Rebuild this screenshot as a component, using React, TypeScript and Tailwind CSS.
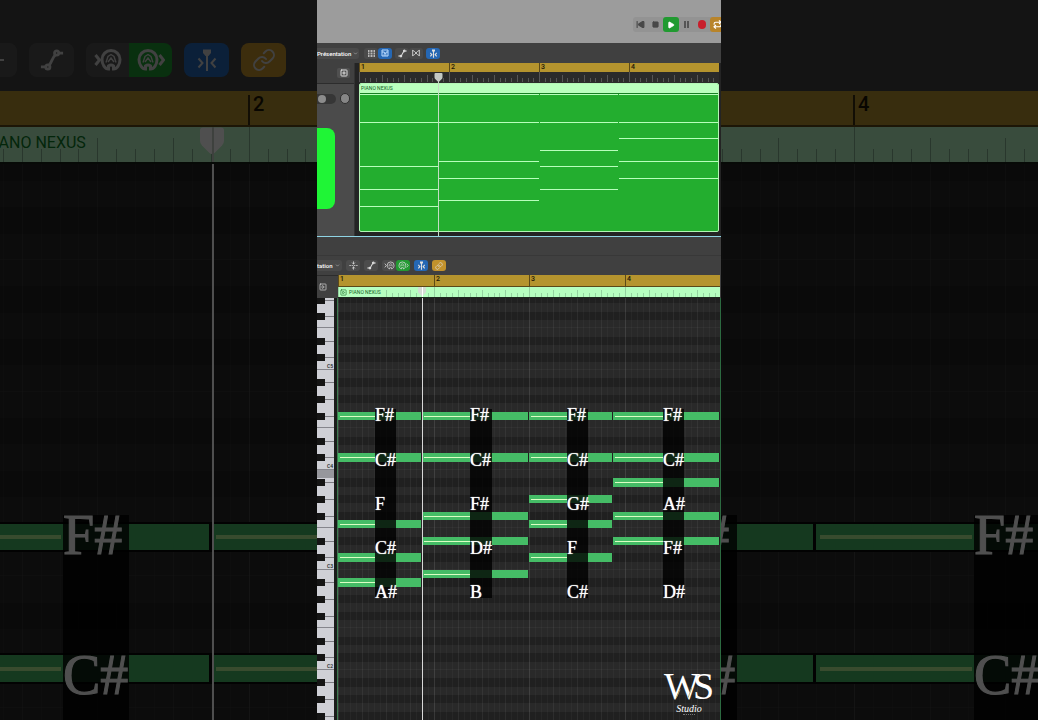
import React from "react";
import {
  ChevronDown,
  FoldVertical,
  Link,
  Play,
  Repeat,
  SkipBack,
  Square,
  SquarePlay,
  SquarePlus,
} from "lucide-react";

const BLACK = [1, 3, 6, 8, 10];
const ZOOM = 3.163;
const BAR = 95.7;
const PLAYHEAD = 84;

type Chord = {
  start: number;
  end: number;
  labelStart: number;
  labelEnd: number;
  pitches: number[];
  names: string[];
};

// Pitches are semitones relative to C4; horizontal values are roll units.
const CHORDS: Chord[] = [
  { start: 0, end: 83, labelStart: 37, labelEnd: 58, pitches: [6, 1, -7, -11, -14], names: ["F#", "C#", "F", "C#", "A#"] },
  { start: 84, end: 190, labelStart: 132, labelEnd: 154, pitches: [6, 1, -6, -9, -13], names: ["F#", "C#", "F#", "D#", "B"] },
  { start: 191, end: 274, labelStart: 229, labelEnd: 250, pitches: [6, 1, -4, -7, -11], names: ["F#", "C#", "G#", "F", "C#"] },
  { start: 275, end: 381, labelStart: 325, labelEnd: 346, pitches: [6, 1, -2, -6, -9], names: ["F#", "C#", "A#", "F#", "D#"] },
];

const mod12 = (p: number) => ((p % 12) + 12) % 12;
const rowTop = (p: number, s: number) => Math.max(0, Math.round((172 - ((p + 1) * 25) / 3) * s));
const PITCHES = Array.from({ length: 76 }, (_, i) => 20 - i);

function CurveIcon({ className }: { className: string }) {
  return (
    <svg viewBox="0 0 26 26" className={className} fill="none" stroke="currentColor" strokeWidth="2">
      <path d="M1 20.5h5M10 18.5C13 15 13 11 16.5 7.500M20.500 5.500H25" />
      <circle cx="8.500" cy="20.500" r="2.300" />
      <circle cx="18" cy="5.500" r="2.300" />
    </svg>
  );
}

function MidiIcon({ className, out }: { className: string; out?: boolean }) {
  return (
    <svg viewBox="0 0 28 24" className={className} fill="none" stroke="currentColor" strokeWidth="2">
      <g transform={out ? undefined : "translate(6 0)"}>
        <path d="M8.500 18v3C5 21 2 16.500 2 11.500a9 9 0 0 1 18 0C20 16.500 17 21 13.500 21v-3q-2.500-2-5 0z" />
        <path d="M6 14.500l2-6 3-2 3 2 2 6M8 14l3-4 3 4" strokeWidth="1.400" />
      </g>
      <path d={out ? "M22.500 7l4 5-4 5" : "M1.500 7l4 5-4 5"} />
    </svg>
  );
}

function CatchIcon({ className }: { className: string }) {
  return (
    <svg viewBox="0 0 24 24" className={className} fill="none" stroke="currentColor" strokeWidth="2">
      <path d="M12 7v16M3.500 10.500l4 4.500-4 4.500M20.500 10.500l-4 4.500 4 4.500" />
      <path d="M8 1.500h8V5l-2.500 3h-3L8 5z" fill="currentColor" stroke="none" />
    </svg>
  );
}

function GridIcon({ className }: { className: string }) {
  return (
    <svg viewBox="0 0 7 7" className={className} fill="currentColor">
      {[0, 1, 2].map((r) => (
        <path key={r} d={`M0 ${r * 2.5}h1.500v2h-1.500zM2.500 ${r * 2.5}h2v2h-2zM5.500 ${r * 2.5}h1.500v2h-1.500z`} />
      ))}
    </svg>
  );
}

function FlexIcon({ className }: { className: string }) {
  return (
    <svg viewBox="0 0 24 24" className={className} fill="none" stroke="currentColor" strokeWidth="2.500">
      <path d="M2 3v18M22 3v18M2 4c8 2 12 14 20 16M22 4C14 6 10 18 2 20" />
    </svg>
  );
}

function RegionIcon({ className }: { className: string }) {
  return (
    <svg viewBox="0 0 24 24" className={className} fill="none" stroke="currentColor" strokeWidth="3">
      <path d="M3 3h18v18H3zM3 9h7v5h5V9h6M7 18h10" />
    </svg>
  );
}

function Pin({ className }: { className: string }) {
  return (
    <svg viewBox="0 0 24 27" className={className}>
      <path d="M3 0h18q3 0 3 3v10q0 3-2 5l-7 7q-3 3-6 0l-7-7q-2-2-2-5V3q0-3 3-3z" fill="currentColor" />
    </svg>
  );
}

function Ticks({ bar, height, offset, color, bars }: { bar: number; height: number; offset: number; color: string; bars: number }) {
  return (
    <svg className="absolute inset-0 size-full" aria-hidden="true">
      {Array.from({ length: bars * 16 }, (_, i) => {
        const x = Math.round(offset + (i * bar) / 16);
        const top = i % 16 === 0 ? 0 : i % 4 === 0 ? height * 0.3 : height * 0.62;
        return <rect key={i} x={x} y={Math.round(top)} width={1} height={Math.round(height - top)} fill={color} />;
      })}
    </svg>
  );
}

function BarNumbers({ bar, offset, large, numbers = [1, 2, 3, 4] }: { bar: number; offset: number; large?: boolean; numbers?: number[] }) {
  return (
    <>
      {numbers.map((n) => (
        <span
          key={n}
          style={{ left: Math.round(offset + (n - 1) * bar) }}
          className={
            large
              ? "absolute top-1 bottom-0 border-l-2 border-[#3a2f10] pl-[3px] font-[Roboto,sans-serif] text-[20px] leading-[18px] font-medium text-[#1c1605]"
              : "absolute top-0 bottom-0 border-l border-[#5c4a18] pl-px font-[Roboto,sans-serif] text-[7px] leading-[9px] font-medium text-[#1c1605]"
          }
        >
          {n}
        </span>
      ))}
    </>
  );
}

type RollProps = { scale: number; offset: number; large?: boolean; chords?: number[]; rows?: number; labelled?: number[] };

function Roll({ scale, offset, large, chords = [0, 1, 2, 3], rows = 5, labelled = [0, 1, 2, 3] }: RollProps) {
  const x = (v: number) => Math.round(offset + v * scale);
  return (
    <div className="relative min-h-0 flex-1 overflow-hidden bg-[#1e1e1e]">
      <div className="absolute inset-0">
        {PITCHES.map((p) => (
          <div
            key={p}
            style={{ height: rowTop(p - 1, scale) - rowTop(p, scale) }}
            className={
              BLACK.includes(mod12(p))
                ? "bg-[#202020]"
                : mod12(p) === 0 || mod12(p) === 5
                  ? "border-b border-[#303030] bg-[#292929]"
                  : "bg-[#292929]"
            }
          />
        ))}
      </div>
      <svg className="absolute inset-0 size-full" aria-hidden="true">
        {Array.from({ length: 64 }, (_, i) => (
          <rect
            key={i}
            x={x((i * BAR) / 16)}
            y={0}
            width={1}
            height="100%"
            fill="#ffffff"
            opacity={i % 16 === 0 ? 0.11 : i % 4 === 0 ? 0.06 : 0.03}
          />
        ))}
      </svg>
      {chords.map((k) => {
        const c = CHORDS[k];
        return (
          <React.Fragment key={c.start}>
            {c.pitches.slice(0, rows).map((p) => (
              <div
                key={p}
                style={{ left: x(c.start), width: x(c.end) - x(c.start), top: rowTop(p, scale), height: rowTop(p - 1, scale) - rowTop(p, scale) }}
                className={
                  large
                    ? "absolute flex items-center bg-[#45b864] outline-2 outline-[#080808]"
                    : "absolute flex items-center bg-[#45bc66]"
                }
              >
                <span
                  style={{ width: Math.round((c.labelStart - c.start - 2) * scale) }}
                  className={large ? "ml-1 h-1 bg-[#b4f096]" : "ml-[2px] h-px bg-[#dcffc4]"}
                />
              </div>
            ))}
            <div
              style={{
                left: x(c.labelStart),
                width: x(c.labelEnd) - x(c.labelStart),
                top: Math.round(111 * scale),
                height: Math.round(189 * scale),
              }}
              className="absolute bg-black/80"
            />
            {labelled.includes(k) &&
              c.names.slice(0, rows).map((n, i) => (
                <span
                  key={i}
                  style={{ left: x(c.labelStart), top: Math.round((117.2 + 44.3 * i) * scale) }}
                  className={
                    large
                      ? "absolute -mt-7 font-['Liberation_Serif',serif] text-[56px] leading-[56px] text-white [-webkit-text-stroke:1px_white]"
                      : "absolute -mt-[10px] font-['Liberation_Serif',serif] text-[18px] leading-5 text-white [text-shadow:0_0_1px_white]"
                  }
                >
                  {n}
                </span>
              ))}
          </React.Fragment>
        );
      })}
      <div style={{ left: x(PLAYHEAD) }} className={large ? "absolute inset-y-0 w-[2px] bg-white" : "absolute inset-y-0 w-px bg-[#d8d8d8]"} />
    </div>
  );
}

function Backdrop({ origin, tools }: { origin: number; tools?: boolean }) {
  const offset = -54 - origin;
  const head = Math.round(offset + PLAYHEAD * ZOOM);
  return (
    <section aria-hidden="true" className="min-w-0 flex-1 bg-black">
      <div className="flex h-full flex-col overflow-hidden opacity-[.31]">
        <div className="h-[29px] shrink-0 bg-[#404040]" />
        <div className="flex h-[62px] shrink-0 items-center bg-[#404040] text-[#d0d0d0]">
          {tools && (
            <>
              <span className="flex h-[34px] w-[17px] items-center rounded-r-lg bg-[#525252]">
                <span className="h-[2px] w-1 bg-[#d0d0d0]" />
              </span>
              <span className="ml-3 flex h-[34px] w-[45px] items-center justify-center rounded-lg bg-[#525252]">
                <CurveIcon className="size-6 stroke-[3px]" />
              </span>
              <span className="ml-3 flex h-[34px] w-[43px] items-center justify-center rounded-l-lg bg-[#525252]">
                <MidiIcon className="h-6 w-7 stroke-[3px]" />
              </span>
              <span className="flex h-[34px] w-[43px] items-center justify-center rounded-r-lg bg-[#1f9a30]">
                <MidiIcon out className="h-6 w-7 stroke-[3px]" />
              </span>
              <span className="ml-3 flex h-[34px] w-[45px] items-center justify-center rounded-lg bg-[#2568b8]">
                <CatchIcon className="size-6" />
              </span>
              <span className="ml-3 flex h-[34px] w-[45px] items-center justify-center rounded-lg bg-[#c2922c]">
                <Link className="size-6" />
              </span>
            </>
          )}
        </div>
        <div className="relative h-9 shrink-0 overflow-hidden border-b-2 border-[#5a4818] bg-[#b5922e]">
          <BarNumbers bar={BAR * ZOOM} offset={offset - 1} large numbers={tools ? [2] : [4]} />
        </div>
        <div className="relative h-[37px] shrink-0 overflow-hidden border-b-2 border-[#182018] bg-[#b8f5c4]">
          <Ticks bar={BAR * ZOOM} bars={4} height={36} offset={offset} color="#86b092" />
          {tools && (
            <>
              <span style={{ left: offset + 38 }} className="absolute top-[6px] font-[Roboto,sans-serif] text-[16px] leading-5 whitespace-nowrap text-[#0a7a26]">
                PIANO NEXUS
              </span>
              <span style={{ left: head }} className="absolute top-0 -ml-3 text-white">
                <Pin className="h-[28px] w-6" />
              </span>
              <span style={{ left: head }} className="absolute inset-y-0 w-[2px] bg-[#c8d0c8]" />
            </>
          )}
        </div>
        <Roll scale={ZOOM} offset={offset} large rows={2} chords={tools ? [0, 1] : [2, 3]} labelled={tools ? [0] : [2, 3]} />
      </div>
    </section>
  );
}

const TOOL = "flex h-[11px] w-[14px] items-center justify-center rounded-[3px] ";

function Transport() {
  const cell = "flex h-[15px] w-[15px] shrink-0 items-center justify-center text-[#484848]";
  return (
    <header className="flex h-[43px] shrink-0 items-center justify-end overflow-hidden bg-[#9c9c9c] pt-[6px]">
      <div className="flex w-[88px] overflow-hidden rounded-l-[3px] bg-[#939393]">
        <button aria-label="Rewind" className={cell}>
          <SkipBack className="size-[9px]" fill="currentColor" strokeWidth={3} />
        </button>
        <button aria-label="Stop" className={cell}>
          <Square className="size-[7px]" fill="currentColor" strokeWidth={3} />
        </button>
        <button aria-label="Play" className="flex h-[15px] w-4 shrink-0 items-center justify-center rounded-[3px] bg-[#219a31] text-white">
          <Play className="size-[8px]" fill="currentColor" />
        </button>
        <button aria-label="Pause" className={cell + " gap-px"}>
          <span className="h-[7px] w-[2px] bg-[#555]" />
          <span className="h-[7px] w-[2px] bg-[#555]" />
        </button>
        <button aria-label="Record" className={cell}>
          <span className="h-[9px] w-[8px] rounded-full bg-[#c81e2c]" />
        </button>
        <button aria-label="Cycle" className="ml-px flex h-[15px] w-[15px] shrink-0 items-center justify-center rounded-[3px] bg-[#b8842a] text-white">
          <Repeat className="size-[9px]" strokeWidth={3} />
        </button>
      </div>
    </header>
  );
}

function Arrange() {
  return (
    <section className="shrink-0">
      <div className="flex h-5 items-center bg-[#404040] text-[#e0e0e0]">
        <button className="flex h-[11px] w-[42px] items-center justify-between rounded-r-[3px] bg-[#4a4a4a] pr-px font-[Roboto,sans-serif] text-[6px] leading-[11px] font-medium text-white">
          Présentation
          <ChevronDown className="size-[5px] text-[#b0b0b0]" strokeWidth={3} />
        </button>
        <button aria-label="Grid view" className={TOOL + "ml-[5px] bg-[#4a4a4a] text-[#b8b8b8]"}>
          <GridIcon className="size-[7px]" />
        </button>
        <button aria-label="Region view" className={TOOL + "bg-[#2567b4] text-[#bcdcff]"}>
          <RegionIcon className="size-[8px]" />
        </button>
        <button aria-label="Automation" className={TOOL + "ml-[3px] bg-[#4a4a4a]"}>
          <CurveIcon className="size-[9px] stroke-[3px]" />
        </button>
        <button aria-label="Flex" className={TOOL + "bg-[#4a4a4a]"}>
          <FlexIcon className="size-[8px]" />
        </button>
        <button aria-label="Catch playhead" className={TOOL + "ml-[3px] bg-[#2567b4]"}>
          <CatchIcon className="size-[9px] stroke-[3px]" />
        </button>
      </div>
      <div className="flex h-[173px] bg-[#242424]">
        <div className="flex w-[38px] shrink-0 flex-col border-r border-[#333]">
          <div className="flex h-5 items-center justify-end bg-[#404040] pr-1">
            <button aria-label="Add track" className="flex h-[10px] w-[13px] items-center justify-center rounded-[2px] bg-[#505050] text-[#e0e0e0]">
              <SquarePlus className="size-[8px]" strokeWidth={3} />
            </button>
          </div>
          <div className="flex-1 border-t border-[#2c2c2c] bg-[#4b4b4b]">
            <div className="mt-[9px] flex items-center justify-between pr-1">
              <span className="flex h-[10px] w-[19px] items-center rounded-r-full bg-[#363636]">
                <span className="ml-px size-[8px] rounded-full bg-[#8c8c8c]" />
              </span>
              <span className="h-[11px] w-[10px] rounded-full border border-[#2e2e2e] bg-[#868686]" />
            </div>
            <div className="mt-6 h-[81px] w-[18px] rounded-r-lg bg-[#1ff536]" />
          </div>
        </div>
        <div className="relative mr-[2px] ml-1 flex min-w-0 flex-1 flex-col">
          <div className="relative h-[9px] overflow-hidden bg-[#b5942e]">
            <BarNumbers bar={90} offset={0} />
          </div>
          <div className="relative h-[11px] overflow-hidden bg-[#2b2b2b]">
            <Ticks bar={90} bars={4} height={10} offset={0} color="#565656" />
          </div>
          <div className="relative h-[149px] overflow-hidden rounded-[2px] border border-[#b4f5b6] bg-[#23ae2f]">
            <div className="h-[9px] bg-[#baffbe] pl-px font-[Roboto,sans-serif] text-[5px] leading-[9px] text-[#13601e]">PIANO NEXUS</div>
            <div className="h-px bg-[#178024]" />
            {CHORDS.map((c, i) => {
              const edges = [0, 79, 180, 259, 360];
              return c.pitches.map((p) => (
                <div
                  key={`${i}-${p}`}
                  style={{ left: edges[i], width: edges[i + 1] - edges[i] - 1, top: Math.round(37.6 + (1 - p) * 5.6) }}
                  className="absolute h-px bg-[#b8ffbc]"
                />
              ));
            })}
          </div>
          <div className="absolute top-[10px] bottom-0 left-[79px] w-px bg-[#c4dcc4]" />
          <div className="absolute top-[10px] left-[75px] text-[#c4c9c4]">
            <Pin className="h-[9px] w-[9px]" />
          </div>
        </div>
      </div>
    </section>
  );
}

function Keyboard() {
  return (
    <div className="relative w-[17px] shrink-0 overflow-hidden bg-[#cfd0d6]">
      <div className="absolute inset-0">
        {PITCHES.map((p) => {
          const n = mod12(p);
          const height = rowTop(p - 1, 1) - rowTop(p, 1);
          if (BLACK.includes(n)) {
            return (
              <div key={p} style={{ height }} className="flex items-center">
                <span className="h-[7px] w-[8px] bg-[#151515]" />
                <span className="h-px flex-1 bg-[#7c7c82]" />
              </div>
            );
          }
          return (
            <div
              key={p}
              style={{ height }}
              className={
                "pr-px text-right font-[Roboto,sans-serif] text-[5px] leading-[8px] font-medium text-[#222] " +
                (n === 0 || n === 5 ? "border-b border-[#85858c] " : "") +
                (p === -1 ? "bg-[#96979c]" : "")
              }
            >
              {n === 0 && p > -30 ? `C${4 + p / 12}` : ""}
            </div>
          );
        })}
      </div>
    </div>
  );
}

function Editor() {
  return (
    <section className="relative flex min-h-[484px] flex-1 flex-col border-t border-[#8fd4e4] bg-[#404040]">
      <div className="h-[19px] shrink-0 border-b border-[#383838]" />
      <div className="flex h-[19px] shrink-0 items-center gap-1 text-[#e0e0e0]">
        <button className="flex h-[11px] w-[25px] items-center justify-between rounded-r-[3px] bg-[#4a4a4a] pr-[2px] font-[Roboto,sans-serif] text-[6px] leading-[11px] font-medium text-white">
          tation
          <ChevronDown className="size-[5px] text-[#b0b0b0]" strokeWidth={3} />
        </button>
        <button aria-label="Collapse" className={TOOL + "bg-[#4c4c4c]"}>
          <FoldVertical className="size-[9px]" />
        </button>
        <button aria-label="Automation" className={TOOL + "bg-[#4c4c4c]"}>
          <CurveIcon className="size-[9px] stroke-[3px]" />
        </button>
        <div className="flex">
          <button aria-label="MIDI in" className={TOOL + "bg-[#4c4c4c]"}>
            <MidiIcon className="h-[9px] w-[11px]" />
          </button>
          <button aria-label="MIDI out" className={TOOL + "bg-[#239a32]"}>
            <MidiIcon out className="h-[9px] w-[11px]" />
          </button>
        </div>
        <button aria-label="Catch playhead" className={TOOL + "bg-[#2567b4]"}>
          <CatchIcon className="size-[9px] stroke-[3px]" />
        </button>
        <button aria-label="Link" className={TOOL + "bg-[#c2922c]"}>
          <Link className="size-[8px]" />
        </button>
      </div>
      <div className="flex h-[23px] shrink-0">
        <div className="flex w-[21px] shrink-0 items-center border-t border-[#2c2c2c] pl-px">
          <button aria-label="Play region" className="flex size-[9px] items-center justify-center text-[#e0e0e0]">
            <SquarePlay className="size-[8px]" />
          </button>
        </div>
        <div className="mr-px flex min-w-0 flex-1 flex-col">
          <div className="relative h-3 overflow-hidden border-b border-[#5a4818] bg-[#b5942e]">
            <BarNumbers bar={BAR} offset={0} />
          </div>
          <div className="relative h-[11px] overflow-hidden border-b border-[#1c2a1e] bg-[#b6ffc0]">
            <Ticks bar={BAR} bars={4} height={10} offset={0} color="#94d2a0" />
            <span className="absolute inset-y-0 left-[2px] flex items-center gap-[2px] bg-[#b6ffc0] font-[Roboto,sans-serif] text-[5px] leading-[10px] text-[#13601e]">
              <SquarePlay className="size-[7px]" />
              PIANO NEXUS
            </span>
            <span className="absolute top-0 left-[80px] text-[#d4dcd4]">
              <Pin className="h-[9px] w-[8px]" />
            </span>
            <span className="absolute inset-y-0 left-[84px] w-px bg-white" />
          </div>
        </div>
      </div>
      <div className="flex min-h-0 flex-1">
        <Keyboard />
        <div className="w-1 shrink-0 border-r border-[#3c7a50] bg-[#1a1c1a]" />
        <div className="flex min-w-0 flex-1 flex-col border-r border-[#2c6a40]">
          <Roll scale={1} offset={0} />
        </div>
      </div>
      <div className="absolute right-2 bottom-[5px] flex w-12 flex-col items-center font-['Liberation_Serif',serif] text-white">
        <div className="relative flex text-[38px] leading-9">
          <span>W</span>
          <span className="-ml-[7px]">S</span>
          <svg viewBox="0 0 50 40" className="absolute inset-0 size-full" fill="none">
            <path d="M11 33L15 24M24 33L28 22" stroke="#b9a870" strokeWidth="1" />
          </svg>
        </div>
        <div className="text-[10px] leading-[9px] italic">Studio</div>
        <div className="mt-px w-3 border-b border-dotted border-[#777]" />
      </div>
    </section>
  );
}

export default function App() {
  return (
    <main className="flex h-screen min-h-[720px] w-full overflow-hidden bg-black">
      <Backdrop origin={0} tools />
      <div className="flex w-[404px] shrink-0 flex-col overflow-hidden bg-[#242424]">
        <Transport />
        <Arrange />
        <Editor />
      </div>
      <Backdrop origin={721} />
    </main>
  );
}
